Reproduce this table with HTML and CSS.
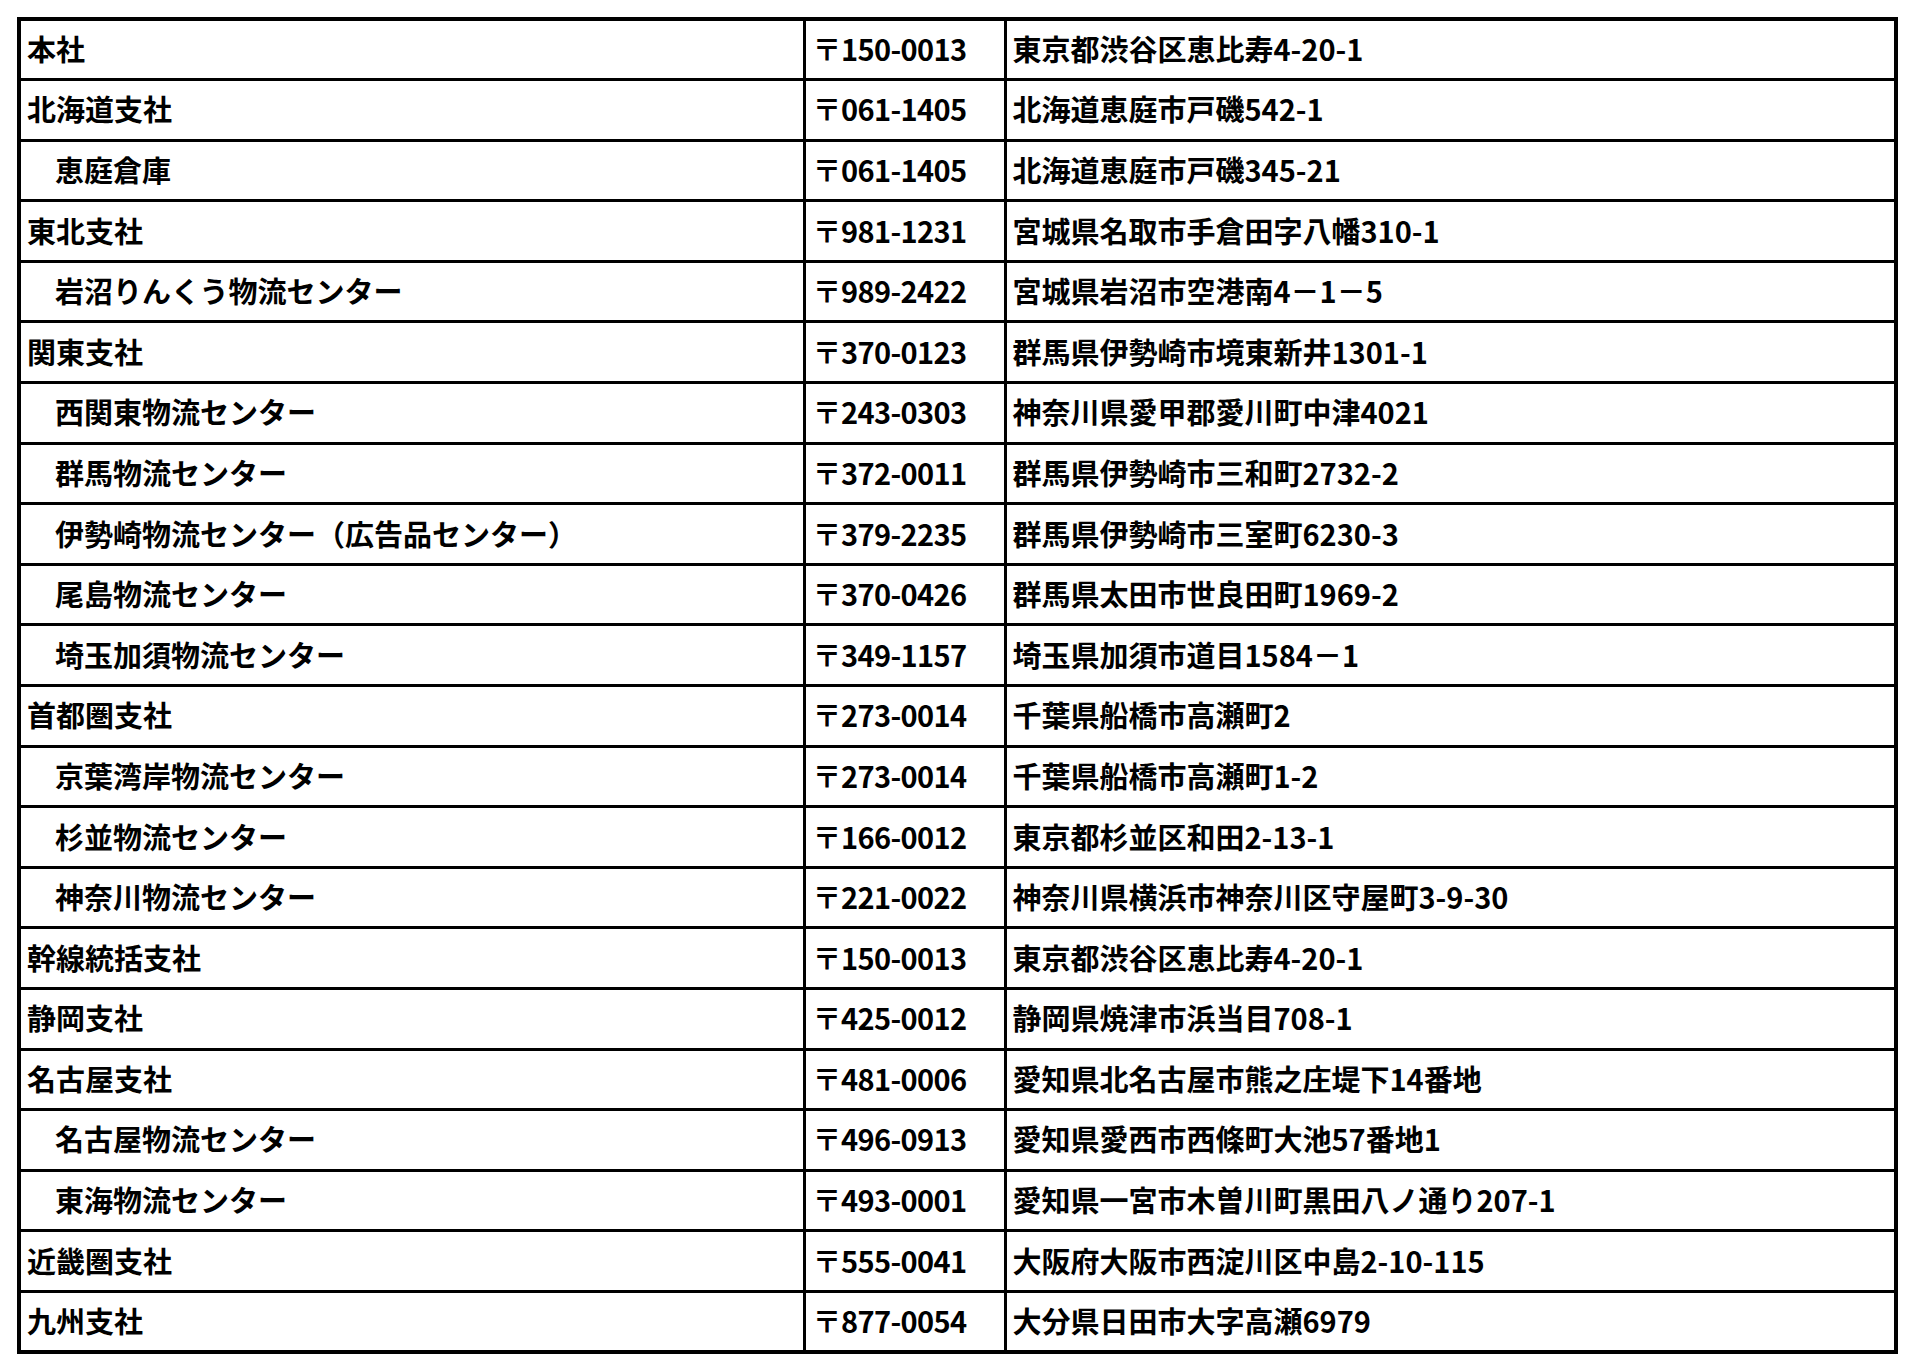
FILE: index.html
```html
<!DOCTYPE html>
<html lang="ja">
<head>
<meta charset="utf-8">
<title>拠点一覧</title>
<link rel="stylesheet" href="styles.css">
</head>
<body>
<div class="wrap">
<table class="sites">
<colgroup><col class="c-name"><col class="c-zip"><col class="c-addr"></colgroup>
<tbody>
<tr><td>本社</td><td class="zip">〒150-0013</td><td>東京都渋谷区恵比寿4-20-1</td></tr>
<tr><td>北海道支社</td><td class="zip">〒061-1405</td><td>北海道恵庭市戸磯542-1</td></tr>
<tr><td class="sub">恵庭倉庫</td><td class="zip">〒061-1405</td><td>北海道恵庭市戸磯345-21</td></tr>
<tr><td>東北支社</td><td class="zip">〒981-1231</td><td>宮城県名取市手倉田字八幡310-1</td></tr>
<tr><td class="sub">岩沼りんくう物流センター</td><td class="zip">〒989-2422</td><td>宮城県岩沼市空港南4－1－5</td></tr>
<tr><td>関東支社</td><td class="zip">〒370-0123</td><td>群馬県伊勢崎市境東新井1301-1</td></tr>
<tr><td class="sub">西関東物流センター</td><td class="zip">〒243-0303</td><td>神奈川県愛甲郡愛川町中津4021</td></tr>
<tr><td class="sub">群馬物流センター</td><td class="zip">〒372-0011</td><td>群馬県伊勢崎市三和町2732-2</td></tr>
<tr><td class="sub">伊勢崎物流センター（広告品センター）</td><td class="zip">〒379-2235</td><td>群馬県伊勢崎市三室町6230-3</td></tr>
<tr><td class="sub">尾島物流センター</td><td class="zip">〒370-0426</td><td>群馬県太田市世良田町1969-2</td></tr>
<tr><td class="sub">埼玉加須物流センター</td><td class="zip">〒349-1157</td><td>埼玉県加須市道目1584－1</td></tr>
<tr><td>首都圏支社</td><td class="zip">〒273-0014</td><td>千葉県船橋市高瀬町2</td></tr>
<tr><td class="sub">京葉湾岸物流センター</td><td class="zip">〒273-0014</td><td>千葉県船橋市高瀬町1-2</td></tr>
<tr><td class="sub">杉並物流センター</td><td class="zip">〒166-0012</td><td>東京都杉並区和田2-13-1</td></tr>
<tr><td class="sub">神奈川物流センター</td><td class="zip">〒221-0022</td><td>神奈川県横浜市神奈川区守屋町3-9-30</td></tr>
<tr><td>幹線統括支社</td><td class="zip">〒150-0013</td><td>東京都渋谷区恵比寿4-20-1</td></tr>
<tr><td>静岡支社</td><td class="zip">〒425-0012</td><td>静岡県焼津市浜当目708-1</td></tr>
<tr><td>名古屋支社</td><td class="zip">〒481-0006</td><td>愛知県北名古屋市熊之庄堤下14番地</td></tr>
<tr><td class="sub">名古屋物流センター</td><td class="zip">〒496-0913</td><td>愛知県愛西市西條町大池57番地1</td></tr>
<tr><td class="sub">東海物流センター</td><td class="zip">〒493-0001</td><td>愛知県一宮市木曽川町黒田八ノ通り207-1</td></tr>
<tr><td>近畿圏支社</td><td class="zip">〒555-0041</td><td>大阪府大阪市西淀川区中島2-10-115</td></tr>
<tr><td>九州支社</td><td class="zip">〒877-0054</td><td>大分県日田市大字高瀬6979</td></tr>
</tbody>
</table>
</div>
</body>
</html>
```
FILE: styles.css
```css
html, body {
  margin: 0;
  padding: 0;
  background: #ffffff;
}
body {
  font-family: "Noto Sans CJK JP", "Noto Sans", sans-serif;
  font-weight: 700;
  color: #000000;
}
.wrap {
  padding: 17px 0 0 17px;
}
.sites {
  border-collapse: collapse;
  table-layout: fixed;
  width: 1877px;
  border: 4px solid #000;
}
.c-name { width: 785px; }
.c-zip { width: 201px; }
.c-addr { width: 891px; }
.sites td {
  border: 3px solid #000;
  height: 60.6px;
  box-sizing: border-box;
  padding: 0 6px 3px 6px;
  font-size: 29px;
  line-height: 34px;
  vertical-align: middle;
  white-space: nowrap;
}
.sites td.sub {
  padding-left: 34px;
}
.sites td.zip {
  padding-left: 7px;
  letter-spacing: -0.6px;
}
```
